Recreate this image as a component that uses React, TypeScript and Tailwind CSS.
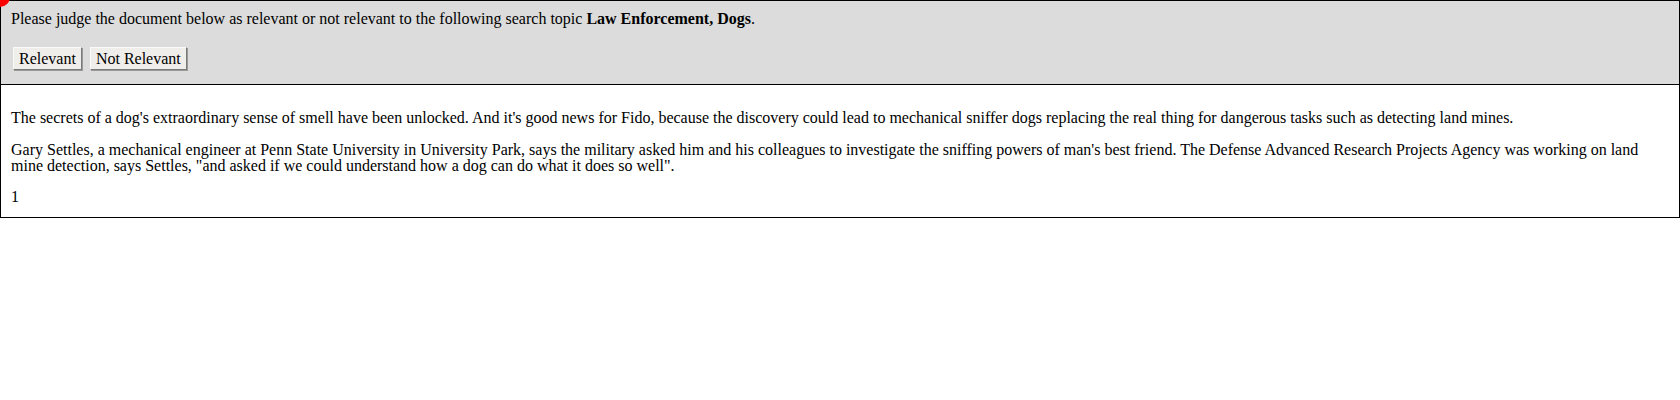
import React from "react";

function Btn({ children }: { children: React.ReactNode }) {
  return (
    <button className="h-[23px] px-[5px] bg-[#f0eeea] text-[16px] leading-[18px] text-black border border-t-[#fafafa] border-l-[#fafafa] border-b-[#7a7a7a] border-r-[#7a7a7a] shadow-[1px_1px_0_#9a9a9a] font-['Liberation_Serif',serif]">
      {children}
    </button>
  );
}

export default function App() {
  return (
    <div className="relative w-[1680px] font-['Liberation_Serif','Times_New_Roman',serif] text-[16px] text-black bg-white min-h-[400px]">
      <div className="border border-black bg-[#dcdcdc] px-[10px] pt-[9px] pb-[14px]">
        <div className="leading-[18px]">
          Please judge the document below as relevant or not relevant to the following search topic{" "}
          <b>Law Enforcement, Dogs</b>.
        </div>
        <div className="mt-[19px] flex gap-[8px] pl-[2px]">
          <Btn>Relevant</Btn>
          <Btn>Not Relevant</Btn>
        </div>
      </div>
      <div className="border-x border-b border-black px-[10px] pt-[24px] pb-[11px]">
        <p className="leading-[18px]">
          The secrets of a dog's extraordinary sense of smell have been unlocked. And it's good news for Fido, because the discovery could lead to mechanical sniffer dogs replacing the real thing for dangerous tasks such as detecting land mines.
        </p>
        <p className="leading-[16px] mt-[15px]">
          Gary Settles, a mechanical engineer at Penn State University in University Park, says the military asked him and his colleagues to investigate the sniffing powers of man's best friend. The Defense Advanced Research Projects Agency was working on land mine detection, says Settles, "and asked if we could understand how a dog can do what it does so well".
        </p>
        <p className="leading-[18px] mt-[14px]">1</p>
      </div>
      <div className="absolute left-[-10px] top-[-13px] w-[20px] h-[20px] rounded-full bg-[#ff0000]" />
    </div>
  );
}
